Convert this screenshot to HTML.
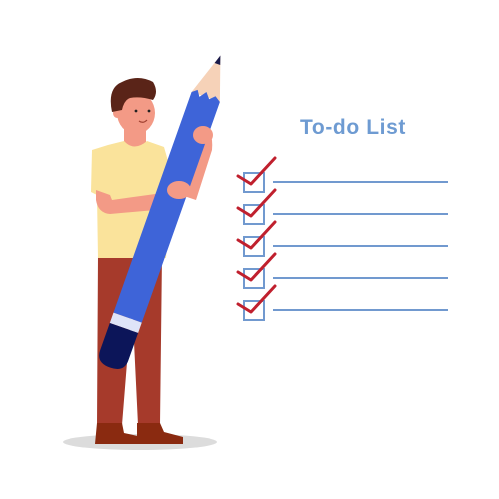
<!DOCTYPE html>
<html><head><style>
html,body{margin:0;padding:0;background:#fff;width:499px;height:499px;overflow:hidden}
</style></head><body>
<svg width="499" height="499" viewBox="0 0 499 499" xmlns="http://www.w3.org/2000/svg">
<ellipse cx="140" cy="442" rx="77" ry="8" fill="#dcdcdc"/>
<path d="M98 255 L162 255 L160 425 L138 425 L132 300 L122 425 L97 425 Z" fill="#a63a2b"/>
<path d="M97 423 L122 423 L124 433 L142 437 L142 444 L95 444 Z" fill="#8a2a10"/>
<path d="M137 423 L160 423 L164 432 L183 437 L183 444 L137 444 Z" fill="#8a2a10"/>
<path d="M124 122 L146 122 L146 148 L124 148 Z" fill="#f39a86"/>
<path d="M108 145 L124 141 Q134 152 147 141 L164 147 L172 175 L166 258 L98 258 L97 195 L91 192 L92 150 Z" fill="#fae39b"/>
<path d="M96 190 L110 195 L112 200 L170 192 L178 208 L110 214 Q98 213 96 200 Z" fill="#f39a86"/>
<ellipse cx="136" cy="113" rx="19" ry="21" fill="#f39a86"/>
<ellipse cx="117" cy="113" rx="4" ry="5" fill="#f39a86"/>
<path d="M112 112 Q107 88 122 82 Q138 74 153 82 Q159 92 153 100 Q140 96 130 98 Q124 100 122 110 Z" fill="#5a2418"/>
<circle cx="136" cy="111" r="1.4" fill="#222"/>
<circle cx="149" cy="111" r="1.4" fill="#222"/>
<path d="M139 121 Q143 124 147 120" stroke="#a04030" stroke-width="1.2" fill="none"/>
<path d="M200 128 Q214 128 212 150 L196 200 L184 196 L196 150 Z" fill="#f39a86"/>
<g transform="translate(165,212) rotate(19.5)">
<path d="M-15 -122 L0 -166 L15 -122 Z" fill="#f6d2b8"/>
<path d="M-3 -157 L0 -166 L3 -157 Z" fill="#1a1a4a"/>
<path d="M-15 -122 L-10 -126 L-6 -120 L-1 -127 L4 -121 L9 -126 L15 -122 L15 112 L-15 112 Z" fill="#3e64d8"/>
<rect x="-15" y="112" width="30" height="11" fill="#dfe4f8"/>
<path d="M-15 123 L15 123 L15 152 Q15 165 0 165 Q-15 165 -15 152 Z" fill="#0c1559"/>
</g>
<ellipse cx="179" cy="190" rx="12" ry="9" fill="#f39a86"/>
<ellipse cx="203" cy="135" rx="10" ry="9" fill="#f39a86"/>
<text x="353" y="134" text-anchor="middle" font-family="Liberation Sans, sans-serif" font-weight="bold" font-size="21" letter-spacing="0.6" fill="#6e9bd2">To-do List</text>
<g stroke="#7199cf" stroke-width="2" fill="none">
<rect x="244" y="173" width="20" height="19"/>
<rect x="244" y="205" width="20" height="19"/>
<rect x="244" y="237" width="20" height="19"/>
<rect x="244" y="269" width="20" height="19"/>
<rect x="244" y="301" width="20" height="19"/>
<path d="M273 182 H448 M273 214 H448 M273 246 H448 M273 278 H448 M273 310 H448"/>
</g>
<g stroke="#c0202e" stroke-width="3" fill="none" stroke-linecap="round" stroke-linejoin="round">
<path d="M238 176 L251 184 L275 158"/>
<path d="M238 208 L251 216 L275 190"/>
<path d="M238 240 L251 248 L275 222"/>
<path d="M238 272 L251 280 L275 254"/>
<path d="M238 304 L251 312 L275 286"/>
</g>
</svg>
</body></html>
